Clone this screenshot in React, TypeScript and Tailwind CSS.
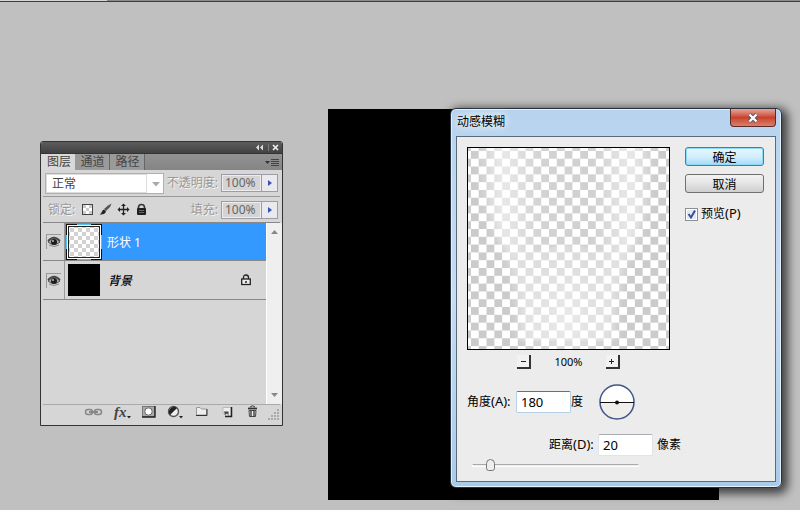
import React from "react";

const tabs = ["图层", "通道", "路径"];

const ticks = [0, 3, 6, 9];

function Eye() {
  return (
    <svg width="14" height="12" viewBox="0 0 14 12">
      <path d="M1 6 Q7 -1 13 6 Q7 11 1 6Z" fill="#aaa" stroke="#555" />
      <path d="M1 5 Q7 -2 13 5" fill="none" stroke="#444" strokeWidth="1.6" />
      <circle cx="7" cy="6" r="3" fill="#1c1c1c" />
      <circle cx="6" cy="5" r="0.9" fill="#ccc" />
      <path d="M2 9 Q7 12 12 9" fill="none" stroke="#888" />
    </svg>
  );
}

function Percent({ id, label }: { id: string; label: string }) {
  return (
    <div className="flex items-center">
      <label htmlFor={id} className="mr-[3px] text-[#999] [text-shadow:1px_1px_0_#f4f4f4]">
        {label}
      </label>
      <div className="flex h-[18px] border border-[#9c9ca4] bg-[#d4d4d4]">
        <input
          id={id}
          defaultValue="100%"
          className="w-[39px] border border-[#eee] bg-transparent pl-[2px] text-xs text-[#666] outline-none"
        />
        <button aria-label={`${label} 滑块`} className="flex w-4 items-center justify-center border-l border-[#9c9ca4] bg-[#e9e9ee]">
          <svg width="4" height="6" viewBox="0 0 4 6">
            <path d="M0 0 L4 3 L0 6Z" fill="#3953b5" />
          </svg>
        </button>
      </div>
    </div>
  );
}

function LayersPanel() {
  return (
    <section className="absolute left-[40px] top-[141px] w-[243px] overflow-hidden rounded-t-[3px] border border-[#333] bg-[#d6d6d6] text-xs">
      <header className="flex h-[11px] items-center justify-end bg-gradient-to-b from-[#5c5c5c] to-[#424242] pr-[3px]">
        <button aria-label="折叠">
          <svg width="10" height="7" viewBox="0 0 10 7" className="block">
            <path d="M4 0.5 L1 3.5 L4 6.5Z M8 0.5 L5 3.5 L8 6.5Z" fill="#ddd" />
          </svg>
        </button>
        <span className="mx-[3px] h-[7px] w-px bg-[#777]" />
        <button aria-label="关闭面板">
          <svg width="7" height="7" viewBox="0 0 7 7" className="block">
            <path d="M1 1 L6 6 M6 1 L1 6" stroke="#eee" strokeWidth="1.7" />
          </svg>
        </button>
      </header>

      <nav className="flex h-[17px] items-stretch border-t border-[#333] bg-gradient-to-b from-[#929292] to-[#858585]">
        {tabs.map((tab, i) => (
          <button
            key={tab}
            className={
              i === 0
                ? "w-[34px] bg-[#d9d9d9] pl-[2px] leading-[16px] text-[#444]"
                : "w-[35px] border-r border-[#666] bg-[#9a9a9a] pl-px leading-[16px] text-[#444]"
            }
          >
            {tab}
          </button>
        ))}
        <button aria-label="面板菜单" className="ml-auto mr-[3px]">
          <svg width="14" height="9" viewBox="0 0 14 9">
            <path d="M0 3 H5 L2.5 6Z" fill="#333" />
            <path d="M6 1.5 H14 M6 3.5 H14 M6 5.5 H14 M6 7.5 H14" stroke="#444" />
          </svg>
        </button>
      </nav>

      <div className="mx-[2px] flex h-[27px] items-center justify-between border-b border-[#999] pl-[2px] pr-[2px]">
        <div className="relative">
          <select
            aria-label="混合模式"
            className="block h-[21px] w-[119px] appearance-none border border-[#b0b0b0] bg-white pl-[6px] pt-[2px] text-xs text-[#444] outline-none"
          >
            <option>正常</option>
          </select>
          <span className="pointer-events-none absolute inset-y-px left-px w-[101px] border border-[#ddd]" />
          <svg width="8" height="5" viewBox="0 0 8 5" className="pointer-events-none absolute right-[4px] top-[9px]">
            <path d="M0 0 H8 L4 4.5Z" fill="#aaa" />
          </svg>
        </div>
        <Percent id="opacity" label="不透明度:" />
      </div>

      <div className="mx-[2px] flex h-[26px] items-center border-b border-[#888] pl-[5px] pr-[2px]">
        <span className="text-[#999] [text-shadow:1px_1px_0_#f4f4f4]">锁定:</span>
        <div className="ml-[6px] flex items-center gap-[5px]">
          <button aria-label="锁定透明像素">
            <svg width="13" height="13" viewBox="0 0 13 13" className="block">
              <rect x="1.5" y="1.5" width="10" height="10" fill="#fff" stroke="#444" />
              <path d="M2 2h3v3h-3zM8 2h3v3h-3zM5 5h3v3h-3zM2 8h3v3h-3zM8 8h3v3h-3z" fill="#ccc" />
            </svg>
          </button>
          <button aria-label="锁定图像像素">
            <svg width="13" height="13" viewBox="0 0 13 13" className="block">
              <path d="M12.5 0.5 L11 4 L7 8 L5 6 L9 2.5Z" fill="#555" />
              <path d="M5 6.5 L7 8.5 Q6 12 0.5 11.5 Q2.5 10.5 3 8.5 Q3.5 7 5 6.5Z" fill="#222" />
            </svg>
          </button>
          <button aria-label="锁定位置">
            <svg width="13" height="13" viewBox="0 0 13 13" className="block">
              <path d="M6.5 2 V11 M2 6.5 H11" stroke="#222" strokeWidth="1.3" />
              <path d="M6.5 0.500 L9 3 H4Z M6.5 12.500 L9 10 H4Z M0.500 6.5 L3 4 V9Z M12.500 6.5 L10 4 V9Z" fill="#222" />
            </svg>
          </button>
          <button aria-label="锁定全部">
            <svg width="13" height="13" viewBox="0 0 13 13" className="block">
              <path d="M3.5 6 V4.5 Q3.5 1.5 6.5 1.5 Q9.5 1.5 9.5 4.5 V6" fill="none" stroke="#333" strokeWidth="1.6" />
              <rect x="2" y="5" width="9" height="7" rx="1" fill="#1f1f1f" />
              <path d="M4 7.5h5M4 9.5h5" stroke="#666" />
            </svg>
          </button>
        </div>
        <div className="ml-auto">
          <Percent id="fill" label="填充:" />
        </div>
      </div>

      <div className="flex h-[181px] pl-[2px]">
        <ul className="flex-1">
          <li className="flex h-[38px] items-stretch border-b border-[#888]">
            <div className="flex w-[22px] items-center justify-center border-r border-[#999]">
              <button aria-label="显示形状 1" className="flex h-[15px] w-[15px] items-center justify-center border-l border-t border-[#999]">
                <Eye />
              </button>
            </div>
            <div className="flex flex-1 items-center bg-[#3399ff] pl-px text-white">
              <svg width="36" height="36" viewBox="0 0 36 36">
                <defs>
                  <pattern id="thumb" width="8" height="8" patternUnits="userSpaceOnUse">
                    <rect width="8" height="8" fill="#fff" />
                    <path d="M0 0h4v4h-4zM4 4h4v4h-4z" fill="#d2d2d2" />
                  </pattern>
                </defs>
                <rect x="0.5" y="0.5" width="35" height="35" fill="none" stroke="#111" />
                <path d="M11 0.5H25 M11 35.5H25 M0.5 11V25 M35.5 11V25" stroke="#55c4f0" />
                <rect x="1.5" y="1.5" width="33" height="33" fill="#fff" stroke="#fff" />
                <rect x="2.5" y="2.5" width="31" height="31" fill="url(#thumb)" stroke="#222" />
              </svg>
              <span className="ml-[5px] pt-[2px]">形状 1</span>
            </div>
          </li>
          <li className="flex h-[39px] items-stretch border-b border-[#888]">
            <div className="flex w-[22px] items-center justify-center border-r border-[#999]">
              <button aria-label="显示背景" className="flex h-[15px] w-[15px] items-center justify-center border-l border-t border-[#999]">
                <Eye />
              </button>
            </div>
            <div className="flex flex-1 items-center pl-[3px] text-black">
              <span className="h-8 w-8 bg-black" />
              <span className="ml-[8px] pt-[2px] font-medium italic">背景</span>
              <svg width="12" height="12" viewBox="0 0 12 12" className="ml-auto mr-[14px]">
                <path d="M3.5 5 V3.5 Q3.5 1 6 1 Q8.5 1 8.5 3.5 V5" fill="none" stroke="#222" strokeWidth="1.3" />
                <rect x="1.7" y="5" width="8.6" height="5.5" fill="#eee" stroke="#222" strokeWidth="1.3" />
                <path d="M6 7v2" stroke="#222" strokeWidth="1.5" />
              </svg>
            </div>
          </li>
        </ul>
        <div className="flex w-4 flex-col items-center justify-between border-l border-white bg-[#efefef] py-[7px]">
          <svg width="7" height="4" viewBox="0 0 7 4">
            <path d="M0 4 L3.5 0 L7 4Z" fill="#888" />
          </svg>
          <svg width="7" height="4" viewBox="0 0 7 4">
            <path d="M0 0 L3.5 4 L7 0Z" fill="#888" />
          </svg>
        </div>
      </div>

      <footer className="mx-[2px] flex h-[21px] items-start border-t border-[#aaa] pl-[41px]">
        <div className="flex items-center gap-[11px]">
          <button aria-label="链接图层">
            <svg width="19" height="14" viewBox="0 0 19 14" className="block">
              <rect x="1.5" y="4.5" width="7" height="5" rx="2.5" fill="none" stroke="#888" strokeWidth="1.5" />
              <rect x="10.5" y="4.5" width="7" height="5" rx="2.5" fill="none" stroke="#888" strokeWidth="1.5" />
              <path d="M5 7H14" stroke="#888" strokeWidth="2" />
            </svg>
          </button>
          <button
            aria-label="图层样式"
            className="flex h-[14px] w-[17px] items-end font-['Liberation_Serif',serif] text-[15px] font-bold italic leading-[14px] text-[#444]"
          >
            fx
            <svg width="4" height="3" viewBox="0 0 4 3" className="shrink-0">
              <path d="M0 0H4L2 2.5Z" fill="#222" />
            </svg>
          </button>
          <button aria-label="添加蒙版">
            <svg width="14" height="14" viewBox="0 0 14 14" className="block">
              <rect x="0.5" y="1.5" width="12" height="10" fill="#aaa" stroke="#777" />
              <path d="M0 12H13.5M13 1V12.5" stroke="#222" strokeWidth="1.4" />
              <circle cx="6.5" cy="6.5" r="3.7" fill="#fff" stroke="#666" />
            </svg>
          </button>
          <button aria-label="调整图层">
            <svg width="17" height="14" viewBox="0 0 17 14" className="block">
              <circle cx="6.5" cy="6.5" r="5" fill="#eee" stroke="#555" strokeWidth="1.4" />
              <path d="M3 10 A5 5 0 0 1 10 3Z" fill="#222" />
              <path d="M12 11H16L14 13.5Z" fill="#222" />
            </svg>
          </button>
          <button aria-label="新建组">
            <svg width="14" height="14" viewBox="0 0 14 14" className="block">
              <path d="M1.5 10V2.5H5L6.5 4H11.5V10Z" fill="#eee" stroke="#999" />
              <path d="M1 10.5H12V4" fill="none" stroke="#333" />
            </svg>
          </button>
          <button aria-label="新建图层">
            <svg width="14" height="14" viewBox="0 0 14 14" className="block">
              <path d="M3 2.5H11V11H6L3 8Z" fill="#eee" stroke="#bbb" />
              <path d="M11.5 2V11.500H5" fill="none" stroke="#222" strokeWidth="1.5" />
              <path d="M4 6.5H8.5V10.5L7 8.5L5 10Z" fill="#444" />
            </svg>
          </button>
          <button aria-label="删除图层">
            <svg width="14" height="14" viewBox="0 0 14 14" className="block">
              <path d="M5 2Q7.5 -0.5 10 2" fill="none" stroke="#333" />
              <path d="M3 3.5H12" stroke="#333" strokeWidth="1.8" />
              <path d="M4 5.5H11L10.5 11.500H4.5Z" fill="#eee" stroke="#444" />
              <path d="M6 6V11M9 6V11" stroke="#222" strokeWidth="1.2" />
            </svg>
          </button>
        </div>
        <svg width="12" height="12" viewBox="0 0 12 12" className="ml-auto mt-[4px] shrink-0">
          {ticks.map((t) =>
            ticks
              .filter((u) => t + u >= 9)
              .map((u) => <rect key={`${t}-${u}`} x={t} y={u} width="2" height="2" fill="#aaa" />)
          )}
        </svg>
      </footer>
    </section>
  );
}

function Preview() {
  return (
    <div className="h-[203px] w-[203px] border border-black">
      <svg width="201" height="201" viewBox="0 0 206 206" className="block">
        <defs>
          <pattern id="checker" x="3" y="3" width="16" height="16" patternUnits="userSpaceOnUse">
            <rect width="16" height="16" fill="#fff" />
            <path d="M0 0h8v8h-8zM8 8h8v8h-8z" fill="#cbcbcb" />
          </pattern>
          <linearGradient id="shine">
            <stop offset="0" stopColor="#fff" stopOpacity="0" />
            <stop offset="0.13" stopColor="#fff" stopOpacity="0.6" />
            <stop offset="0.35" stopColor="#fff" stopOpacity="0.15" />
            <stop offset="0.65" stopColor="#fff" stopOpacity="0.1" />
            <stop offset="0.87" stopColor="#fff" stopOpacity="0.6" />
            <stop offset="1" stopColor="#fff" stopOpacity="0" />
          </linearGradient>
          <radialGradient id="base">
            <stop offset="0" stopColor="#fff" stopOpacity="0.45" />
            <stop offset="1" stopColor="#fff" stopOpacity="0" />
          </radialGradient>
          <filter id="soften" x="-20%" width="140%">
            <feGaussianBlur stdDeviation="5 0" />
          </filter>
        </defs>
        <rect width="206" height="206" fill="url(#checker)" />
        <path
          d="M10 0H192Q188 60 170 98Q152 140 148 198H54Q52 138 36 102Q10 50 10 0Z"
          fill="url(#shine)"
          filter="url(#soften)"
        />
        <path d="M58 110Q102 90 150 110L144 197H58Z" fill="#fff" fillOpacity="0.15" filter="url(#soften)" />
        <ellipse cx="102" cy="178" rx="58" ry="90" fill="url(#base)" />
      </svg>
    </div>
  );
}

function BlurDialog() {
  return (
    <section className="absolute left-[450px] top-[108px] w-[332px] rounded-[6px] border border-[#26313c] bg-gradient-to-b from-[#b7d3ee] via-[#c5dcf2] to-[#a9cbea] px-[5px] pb-[5px] text-[13px] text-black shadow-[3px_3px_10px_3px_rgba(0,0,0,0.65),inset_0_0_0_1px_#e4f2fd]">
      <header className="flex h-[27px] items-start justify-between">
        <h1 className="pl-px pt-[3px] text-xs leading-[20px] [text-shadow:0_0_8px_#fff,0_0_8px_#fff]">动感模糊</h1>
        <button
          aria-label="关闭"
          className="flex h-[18px] w-[46px] items-center justify-center rounded-b-[4px] border border-t-0 border-[#5b2a2a] bg-gradient-to-b from-[#e5a69b] via-[#c9412d] to-[#d9806a]"
        >
          <svg width="12" height="10" viewBox="0 0 12 10">
            <path d="M2.5 1.5L9.5 8.5M9.5 1.5L2.5 8.5" stroke="#535666" strokeWidth="4.2" />
            <path d="M2.5 1.5L9.5 8.5M9.5 1.5L2.5 8.5" stroke="#fff" strokeWidth="2.4" />
          </svg>
        </button>
      </header>

      <div className="border border-[#5c6b7a] bg-[#ececec] pb-[9px] pl-[10px] pr-[11px] pt-[10px]">
        <div className="flex items-start justify-between">
          <Preview />
          <div className="flex w-[79px] flex-col">
            <button className="h-[19px] rounded-[3px] border border-[#3c7fb1] bg-gradient-to-b from-[#e6f6fe] via-[#d3effd] to-[#a3dbf8] pt-[2px] text-xs leading-[15px] shadow-[inset_0_0_0_1px_#8ed8f8]">
              确定
            </button>
            <button className="mt-[8px] h-[19px] rounded-[3px] border border-[#707070] bg-gradient-to-b from-[#f3f3f3] via-[#e4e4e4] to-[#cfcfcf] pt-[2px] text-xs leading-[15px]">
              取消
            </button>
            <label className="mt-[11px] flex h-[20px] items-center gap-[3px] whitespace-nowrap text-xs">
              <span className="relative block h-[13px] w-[13px]">
                <input
                  type="checkbox"
                  defaultChecked
                  className="block h-[13px] w-[13px] appearance-none border border-[#8a8f94] bg-[#e4e8ef] shadow-[inset_0_0_0_1px_#fff]"
                />
                <svg width="13" height="13" viewBox="0 0 13 13" className="pointer-events-none absolute inset-0">
                  <path d="M3.5 6L6 9.5L10 2.5" fill="none" stroke="#354fa0" strokeWidth="2" />
                </svg>
              </span>
              <span>
                预览<span className="text-[13px]">(P)</span>
              </span>
            </label>
          </div>
        </div>

        <div className="mt-[4px] flex h-[16px] w-[203px] items-center justify-center gap-[23px] text-[11px]">
          <button aria-label="缩小" className="flex h-[14px] w-[14px] items-center justify-center border-b-2 border-r-2 border-[#333] bg-[#f2f2f2]">
            <svg width="5" height="5" viewBox="0 0 5 5">
              <path d="M0 2.5H5" stroke="#222" />
            </svg>
          </button>
          <span>100%</span>
          <button aria-label="放大" className="flex h-[14px] w-[14px] items-center justify-center border-b-2 border-r-2 border-[#333] bg-[#f2f2f2]">
            <svg width="5" height="5" viewBox="0 0 5 5">
              <path d="M0 2.5H5M2.5 0V5" stroke="#222" />
            </svg>
          </button>
        </div>

        <div className="mt-[14px] flex items-center">
          <label htmlFor="angle" className="w-[49px] whitespace-nowrap text-xs">
            角度<span className="text-[13px]">(A):</span>
          </label>
          <input
            id="angle"
            defaultValue="180"
            className="h-[22px] w-[55px] rounded-[2px] border border-[#b5cfe7] border-t-[#3d7bad] bg-white pl-[4px] text-[13px] outline-none"
          />
          <span className="text-xs">度</span>
          <svg width="36" height="36" viewBox="0 0 36 36" className="ml-[16px]">
            <defs>
              <linearGradient id="dial" x2="0" y2="1">
                <stop offset="0.5" stopColor="#fff" />
                <stop offset="0.55" stopColor="#efeeea" />
              </linearGradient>
            </defs>
            <circle cx="18" cy="18" r="17" fill="url(#dial)" stroke="#42548b" strokeWidth="1.5" />
            <path d="M1 18.5H35" stroke="#111" />
            <circle cx="18" cy="18.5" r="2" fill="#111" />
          </svg>
        </div>

        <div className="mt-[14px] flex items-center pl-[82px]">
          <label htmlFor="distance" className="w-[49px] whitespace-nowrap text-xs">
            距离<span className="text-[13px]">(D):</span>
          </label>
          <input
            id="distance"
            defaultValue="20"
            className="h-[22px] w-[55px] rounded-[2px] border border-[#dfe4ea] border-t-[#abadb3] bg-white pl-[4px] text-[13px] outline-none"
          />
          <span className="ml-[4px] text-xs">像素</span>
        </div>

        <input
          type="range"
          aria-label="距离"
          min="1"
          max="100"
          defaultValue="9"
          className="ml-[5px] mt-[3px] block h-[13px] w-[167px] appearance-none bg-transparent [&::-webkit-slider-runnable-track]:h-[3px] [&::-webkit-slider-runnable-track]:border [&::-webkit-slider-runnable-track]:border-[#fff] [&::-webkit-slider-runnable-track]:border-t-[#aaa] [&::-webkit-slider-thumb]:-mt-[6px] [&::-webkit-slider-thumb]:h-[12px] [&::-webkit-slider-thumb]:w-[9px] [&::-webkit-slider-thumb]:appearance-none [&::-webkit-slider-thumb]:rounded-t-[5px] [&::-webkit-slider-thumb]:rounded-b-[3px] [&::-webkit-slider-thumb]:border [&::-webkit-slider-thumb]:border-[#777] [&::-webkit-slider-thumb]:bg-[#eee]"
        />
      </div>
    </section>
  );
}

export default function App() {
  return (
    <main className="relative min-h-screen overflow-hidden bg-[#c0c0c0] font-['Noto_Sans','Noto_Sans_CJK_SC',sans-serif]">
      <div className="flex h-[2px] border-b border-[#3c3c3c]">
        <div className="w-[107px] bg-[#d6d6d6]" />
        <div className="flex-1 bg-[#8c8c8c]" />
      </div>
      <div className="absolute left-[328px] top-[109px] h-[391px] w-[391px] bg-black" />
      <LayersPanel />
      <BlurDialog />
    </main>
  );
}
